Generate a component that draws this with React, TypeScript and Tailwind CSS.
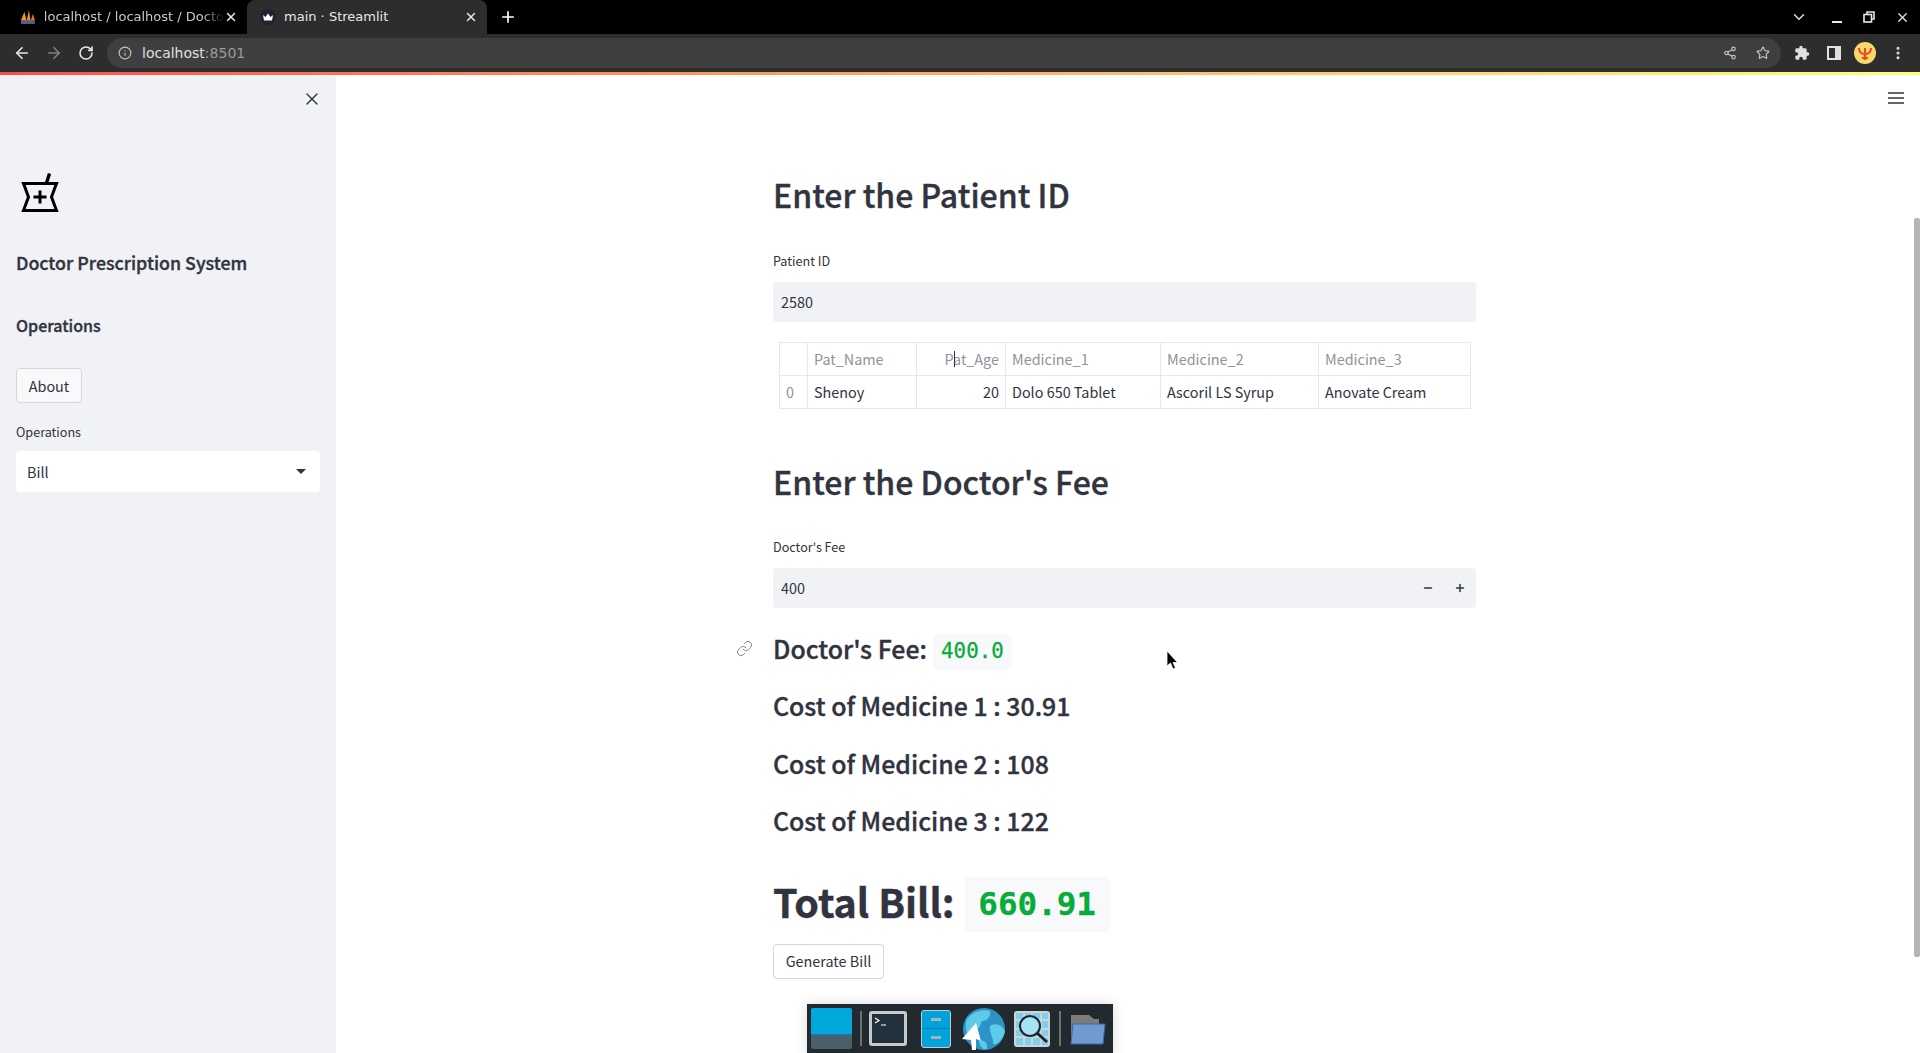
import { ArrowLeft, ArrowRight, ChevronDown, EllipsisVertical, Info, Link, Minus, Plus, RotateCw, Share2, Star, X } from "lucide-react";

const sans = "font-['Noto_Sans_CJK_SC','Noto_Sans',sans-serif]";
// the CJK family has no 600 weight, so thicken the medium one a little
const semi = "font-medium [-webkit-text-stroke:0.35px_currentColor]";

const PmaIcon = () => (
  <svg width="16" height="16" viewBox="0 0 16 16">
    <path d="M1 11 L4.5 3 L6.5 11Z" fill="#f7941d" />
    <path d="M7 11 L9 1 L10.5 11Z" fill="#f7941d" />
    <path d="M11 11 L13 5 L15 11Z" fill="#e8751a" />
    <rect x="1" y="11" width="14" height="4" fill="#5a5f8c" />
  </svg>
);

const CrownIcon = () => (
  <svg width="16" height="16" viewBox="0 0 16 16">
    <circle cx="8" cy="8" r="8" fill="#1f2233" />
    <path d="M3 6 L5.5 8 L8 4.5 L10.5 8 L13 6 L12 11.5 H4Z" fill="#fff" />
  </svg>
);

const Tab = ({ active, label, icon, fade }: { active?: boolean; label: string; icon: React.ReactNode; fade?: boolean }) => (
  <div className={`flex h-[34px] w-[240px] items-center pl-[13px] pr-[9px] ${active ? "rounded-t-[8px] bg-[#2d2d2d]" : ""}`}>
    {icon}
    <span className={`ml-[8px] whitespace-nowrap text-[13px] ${active ? "text-[#e8e8e8]" : "text-[#c8c8c8]"}`}
      style={fade ? { maskImage: "linear-gradient(to right, black 88%, transparent)" } : undefined}>
      {label}
    </span>
    <X size={14} strokeWidth={2.5} className="ml-auto shrink-0 text-[#e8e8e8]" />
  </div>
);

const ChromeBar = () => (
  <div className="font-['DejaVu_Sans',sans-serif]">
    <div className="flex h-[34px] items-center bg-black pl-[7px]">
      <Tab label="localhost / localhost / Docto" icon={<PmaIcon />} fade />
      <Tab active label="main · Streamlit" icon={<CrownIcon />} />
      <Plus size={18} strokeWidth={2.2} className="ml-[12px] text-white" />
      <div className="ml-auto flex items-center pr-[10px] text-[#e0e0e0]">
        <ChevronDown size={18} strokeWidth={2} />
        <div className="ml-[24px] mt-[10px] h-[2px] w-[10px] bg-[#e8e8e8]" />
        <svg width="12" height="12" viewBox="0 0 12 12" fill="none" stroke="#e8e8e8" strokeWidth="1.6" className="ml-[21px]">
          <path d="M4 3V1H11V8H9" />
          <rect x="1" y="3.5" width="7.5" height="7.5" />
        </svg>
        <X size={15} strokeWidth={2.2} className="ml-[20px]" />
      </div>
    </div>
    <div className="flex h-[38px] items-center bg-[#2d2d2d] pl-[13px] pr-[14px]">
      <ArrowLeft size={18} strokeWidth={2.2} className="text-[#e8e8e8]" />
      <ArrowRight size={18} strokeWidth={2.2} className="ml-[14px] text-[#808080]" />
      <RotateCw size={16} strokeWidth={2.4} className="ml-[15px] text-[#e8e8e8]" />
      <div className="ml-[13px] flex h-[30px] flex-1 items-center rounded-full bg-[#3f3f3f] pl-[11px] pr-[11px]">
        <Info size={14} className="text-[#c4c4c4]" />
        <span className="ml-[10px] text-[14px] text-[#e0e0e0]">localhost<span className="text-[#9a9a9a]">:8501</span></span>
        <Share2 size={14} className="ml-auto text-[#c4c4c4]" />
        <Star size={14} className="ml-[19px] text-[#c4c4c4]" />
      </div>
      <svg width="16" height="16" viewBox="0 0 24 24" fill="#e0e0e0" className="ml-[13px]">
        <path d="M20.5 11H19V7a2 2 0 0 0-2-2h-4V3.5a2.5 2.5 0 0 0-5 0V5H4a2 2 0 0 0-2 2v3.8h1.5a2.7 2.7 0 0 1 0 5.4H2V20a2 2 0 0 0 2 2h3.8v-1.5a2.7 2.7 0 0 1 5.4 0V22H17a2 2 0 0 0 2-2v-4h1.5a2.5 2.5 0 0 0 0-5z" />
      </svg>
      <div className="ml-[17px] flex h-[14px] w-[14px] justify-start border-2 border-[#e0e0e0] bg-[#e0e0e0]">
        <div className="h-full w-[6px] bg-[#2d2d2d]" />
      </div>
      <svg width="22" height="22" viewBox="0 0 22 22" className="ml-[13px]">
        <circle cx="11" cy="11" r="11" fill="#fbd66b" />
        <path d="M11 6V18M5 6C5 11 8 12 11 12C14 12 17 11 17 6M8 16H14" fill="none" stroke="#e8491d" strokeWidth="2" />
      </svg>
      <EllipsisVertical size={16} strokeWidth={2.6} className="ml-[14px] text-[#e0e0e0]" />
    </div>
    <div className="h-[3px] bg-gradient-to-r from-[#ff4b4b] to-[#fffd80]" />
  </div>
);

const Sidebar = () => (
  <aside className="flex w-[336px] shrink-0 flex-col bg-[#f0f2f6] px-[16px] text-[#31333f]">
    <X size={20} strokeWidth={1.6} className="ml-[286px] mt-[14px]" />
    <svg width="40" height="44" viewBox="0 0 40 44" fill="none" stroke="#000" strokeWidth="3" className="ml-[4px] mt-[62px]">
      <path d="M3.5 12.5H36.5L31.5 26L36.5 39.5H3.5L8.5 26Z" />
      <path d="M26.5 12L29.5 2.5" strokeWidth="3.4" />
      <path d="M20 19.5V32.5M13.5 26H26.5" />
    </svg>
    <h2 className={`mt-[31px] text-[17.8px] leading-[32px] ${semi}`}>Doctor Prescription System</h2>
    <h3 className={`mt-[31px] text-[16px] leading-[32px] ${semi}`}>Operations</h3>
    <button className="mt-[27px] h-[35px] w-[66px] rounded-[4px] border border-[#d5d6da] bg-[#f9f9fb] text-[14.4px]">About</button>
    <label className="mt-[19px] text-[12.6px] leading-[20px]">Operations</label>
    <div className="mt-[9px] flex h-[41px] items-center justify-between rounded-[4px] bg-white pl-[11px] pr-[14px]">
      <span className="text-[14.4px]">Bill</span>
      <div className="h-0 w-0 border-x-[5px] border-t-[5px] border-x-transparent border-t-[#31333f]" />
    </div>
  </aside>
);

const Field = ({ label, value, stepper }: { label: string; value: string; stepper?: boolean }) => (
  <div>
    <div className="text-[12.6px] leading-[20px]">{label}</div>
    <div className="mt-[11px] flex h-[40px] items-center rounded-[4px] bg-[#f0f2f6] pl-[8px] pr-[10px] text-[14.4px]">
      <span>{value}</span>
      {stepper && (
        <div className="ml-auto flex items-center gap-[20px]">
          <Minus size={12} strokeWidth={3} />
          <Plus size={12} strokeWidth={3} />
        </div>
      )}
    </div>
  </div>
);

const columns = [
  { name: "", value: "0", width: "w-[28px]", head: true },
  { name: "Pat_Name", value: "Shenoy", width: "w-[109px]" },
  { name: "Pat_Age", value: "20", width: "w-[89px]", right: true },
  { name: "Medicine_1", value: "Dolo 650 Tablet", width: "w-[155px]" },
  { name: "Medicine_2", value: "Ascoril LS Syrup", width: "w-[158px]" },
  { name: "Medicine_3", value: "Anovate Cream", width: "w-[152px]" },
];

const DataTable = () => (
  <table className="ml-[6px] mt-[20px] w-[691px] table-fixed border-collapse text-[14.4px]">
    <thead>
      <tr className="h-[33px]">
        {columns.map((c) => (
          <th key={c.name} className={`${c.width} border border-[#e6e8ec] px-[6px] font-normal text-[#8f929b] ${c.right ? "relative text-right" : "text-left"}`}>
            {c.name}
            {c.right && <span className="absolute left-[37px] top-[8px] h-[16px] w-px bg-[#31333f]" />}
          </th>
        ))}
      </tr>
    </thead>
    <tbody>
      <tr className="h-[33px]">
        {columns.map((c) => (
          <td key={c.name} className={`border border-[#e6e8ec] px-[6px] ${c.head ? "text-[#8f929b]" : ""} ${c.right ? "text-right" : ""}`}>
            {c.value}
          </td>
        ))}
      </tr>
    </tbody>
  </table>
);

const Code = ({ children, big }: { children: string; big?: boolean }) => (
  <code className={`inline-flex items-center rounded-[4px] bg-[#f8f9fb] font-['DejaVu_Sans_Mono',monospace] text-[#09ab3b] [-webkit-text-stroke:0.3px_currentColor] ${big ? "ml-[10px] mt-[7px] h-[55px] w-[145px] justify-center text-[32.6px] font-bold" : "ml-[6px] mt-[5px] h-[36px] w-[79px] justify-center text-[20.8px] font-normal"}`}>
    {children}
  </code>
);

const costs = ["Cost of Medicine 1 : 30.91", "Cost of Medicine 2 : 108", "Cost of Medicine 3 : 122"];

const Content = () => (
  <main className="relative flex-1 overflow-hidden bg-white text-[#31333f]">
    <svg width="16" height="12" viewBox="0 0 16 12" stroke="#31333f" strokeWidth="1.6" className="absolute right-[16px] top-[17px]">
      <path d="M0 1H16M0 6H16M0 11H16" />
    </svg>
    <div className="ml-[437px] w-[703px] pt-[94px]">
      <h2 className={`text-[32px] leading-[50px] ${semi}`}>Enter the Patient ID</h2>
      <div className="mt-[32px]">
        <Field label="Patient ID" value="2580" />
      </div>
      <DataTable />
      <h2 className={`mt-[47px] text-[32px] leading-[50px] ${semi}`}>Enter the Doctor's Fee</h2>
      <div className="mt-[31px]">
        <Field label="Doctor's Fee" value="400" stepper />
      </div>
      <div className={`relative mt-[23px] flex h-[36px] items-center text-[24.9px] ${semi}`}>
        <Link size={17} strokeWidth={1.4} className="absolute left-[-37px] top-[9px] text-[#808495] [-webkit-text-stroke:0px]" />
        Doctor's Fee:
        <Code>400.0</Code>
      </div>
      <div className={`mt-[20px] flex flex-col gap-[21px] text-[24.9px] ${semi}`}>
        {costs.map((c) => (
          <div key={c} className="h-[36.5px] leading-[36.5px]">{c}</div>
        ))}
      </div>
      <div className="mt-[35px] flex h-[55px] items-center text-[39.4px] font-bold [-webkit-text-stroke:0.4px_currentColor]">
        Total Bill:
        <Code big>660.91</Code>
      </div>
      <button className="mt-[15px] h-[35px] w-[111px] rounded-[4px] border border-[#d5d6da] bg-white text-[14.4px]">Generate Bill</button>
    </div>
    <div className="absolute right-0 top-[143px] h-[739px] w-[6px] rounded-[2px] bg-[#b4b5b9]" />
    {/* mouse pointer */}
    <svg width="12" height="20" viewBox="0 0 12 20" className="absolute left-[830px] top-[575px]">
      <path d="M1 1V16L4.5 13L7 19L9.5 18L7 12.5H11.5Z" fill="#000" stroke="#fff" strokeWidth="0.8" />
    </svg>
    <Dock />
  </main>
);

const tiles = [0, 1, 2, 3, 4, 5, 6, 7, 8, 9, 10, 11, 12, 13, 14, 15];

const Dock = () => (
  <div className="absolute bottom-0 left-[471px] flex h-[49px] w-[306px] items-center bg-[#222a30] shadow-[0_0_12px_rgba(0,0,0,0.15)]">
    <div className="ml-[4px] flex h-[41px] w-[41px] flex-col overflow-hidden rounded-[2px]">
      <div className="h-[26px] bg-[#00a8dc]" />
      <div className="flex-1 border-t border-[#0b7fa6] bg-[#4a5f6b]" />
    </div>
    <div className="ml-[8px] h-[35px] w-[2px] bg-[#6b7276]" />
    <div className="ml-[7px] flex h-[35px] w-[38px] items-start rounded-[3px] border-[3px] border-[#c3cbcf] bg-[#22313c] p-[2px]">
      <svg width="14" height="12" viewBox="0 0 14 12" fill="none" stroke="#fff" strokeWidth="1.2">
        <path d="M1 2L5 4.5L1 7M7 9H12" />
      </svg>
    </div>
    <div className="ml-[14px] flex h-[38px] w-[30px] flex-col overflow-hidden rounded-[3px] border border-[#c3cbcf] bg-[#00a3da]">
      <div className="flex flex-1 items-center justify-center border-b border-[#0b7fa6]">
        <div className="h-[3px] w-[10px] bg-[#a6b4ba]" />
      </div>
      <div className="flex flex-1 items-center justify-center">
        <div className="h-[3px] w-[10px] bg-[#a6b4ba]" />
      </div>
    </div>
    <svg width="42" height="42" viewBox="0 0 42 42" className="ml-[12px] overflow-visible">
      <circle cx="21" cy="21" r="21" fill="#2f92c6" />
      <path d="M4 11C10 3 20 1 27 3C28 9 24 13 19 13C17 20 12 26 6 29C2 24 2 16 4 11ZM27 18C33 14 40 17 42 24C39 33 34 37 30 36C31 30 26 25 27 18ZM16 33C21 31 25 35 24 41C20 42 17 39 16 33Z" fill="#5ccbea" />
      <path d="M13 15L18 33L13 31L13 42L9 42L8 32L-1 31Z" fill="#fff" />
    </svg>
    <div className="relative ml-[9px] grid h-[36px] w-[36px] grid-cols-4 gap-[2px] rounded-[3px] bg-[#cdd3d6] p-[2px]">
      {tiles.map((t) => (
        <div key={t} className="bg-[#7cd0ee]" />
      ))}
      <svg width="32" height="32" viewBox="0 0 32 32" fill="none" className="absolute left-[3px] top-[2px]">
        <circle cx="13" cy="13" r="10" fill="#a4e2f6" stroke="#1c2429" strokeWidth="2" />
        <path d="M20 20L30 29" stroke="#1c2429" strokeWidth="3" />
      </svg>
    </div>
    <div className="ml-[9px] h-[35px] w-[2px] bg-[#6b7276]" />
    <svg width="38" height="34" viewBox="0 0 38 34" className="ml-[8px]">
      <path d="M2 3H20L25 7H30V30H2Z" fill="#7c7d7b" />
      <path d="M4 12H36L34 32H2Z" fill="#6f9bd3" stroke="#3f68a3" />
    </svg>
  </div>
);

export default function App() {
  return (
    <div className={`flex h-[1053px] w-[1920px] flex-col overflow-hidden ${sans}`}>
      <ChromeBar />
      <div className="flex min-h-0 flex-1">
        <Sidebar />
        <Content />
      </div>
    </div>
  );
}
